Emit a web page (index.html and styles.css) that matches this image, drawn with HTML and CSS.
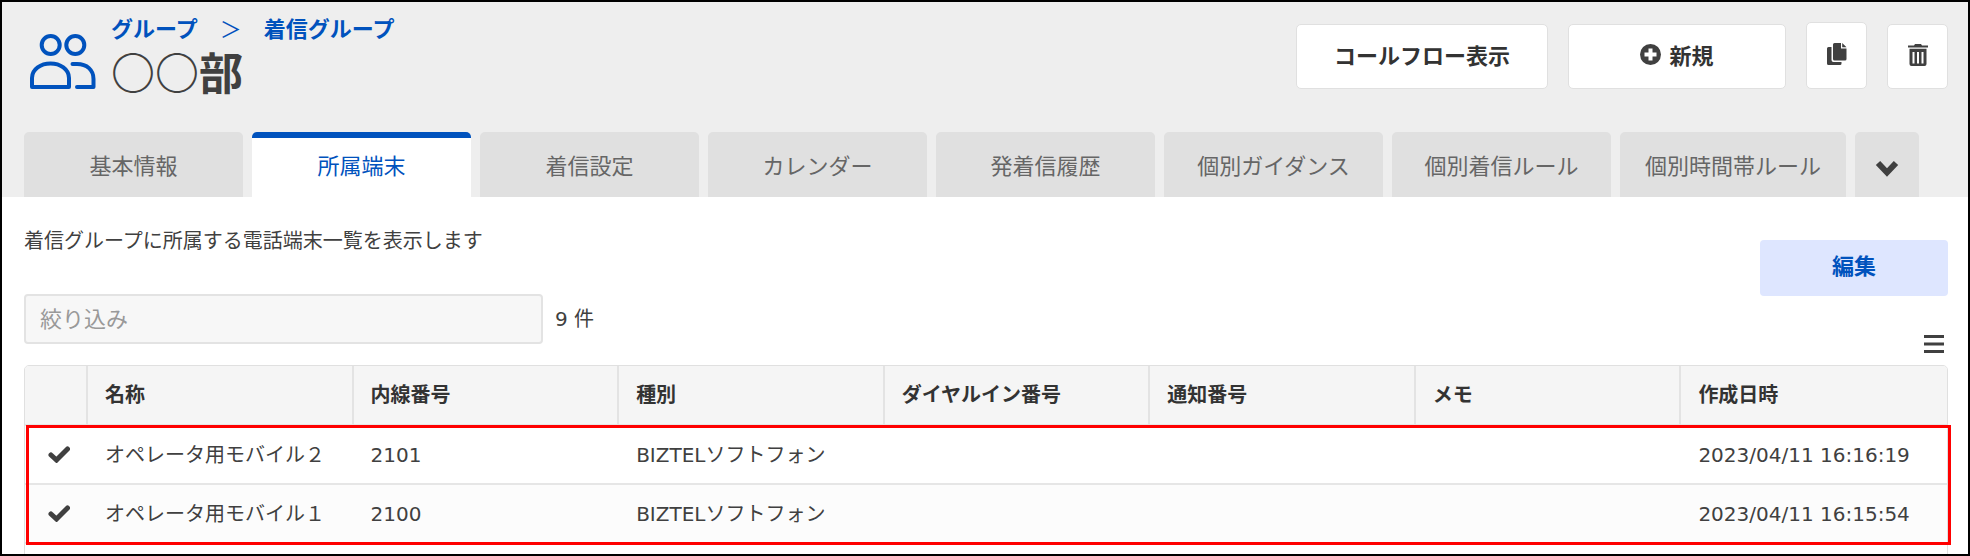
FILE: index.html
```html
<!DOCTYPE html>
<html lang="ja">
<head>
  <meta charset="UTF-8" />
  <meta name="viewport" content="width=device-width, initial-scale=1.0" />
  <title>着信グループ</title>
  <link rel="stylesheet" href="styles.css">
</head>
<body>
  <div class="page">
    <header class="header">
      <div class="header-top">
        <svg class="group-icon" viewBox="0 0 66 56" aria-hidden="true">
          <circle cx="20.7" cy="11" r="9" />
          <circle cx="45.3" cy="11" r="9" />
          <path d="M2 53 V44 C2 35 11 29.5 20.5 29.5 S39 35 39 44 V53 Z" />
          <path d="M42.500 30 H47 C57 30 63.500 36 63.500 45 V53 H47" />
        </svg>
        <div class="titles">
          <nav class="breadcrumb">
            <a href="#">グループ</a>
            <span>＞</span>
            <a href="#">着信グループ</a>
          </nav>
          <h1>○○部</h1>
        </div>
        <div class="actions">
          <button type="button" class="btn btn-flow">コールフロー表示</button>
          <button type="button" class="btn btn-new">
            <svg width="21" height="21" viewBox="0 0 21 21" aria-hidden="true">
              <circle cx="10.5" cy="10.5" r="10.5" />
              <path d="M8.500 4.500 h4 v4 h4 v4 h-4 v4 h-4 v-4 h-4 v-4 h4 z" fill="#fff" />
            </svg>
            新規
          </button>
          <button type="button" class="btn btn-icon btn-copy" aria-label="コピー">
            <svg width="20" height="22" viewBox="0 0 20 22" aria-hidden="true">
              <path d="M1.500 4 H4.500 V17 Q4.500 19 6.500 19 H14.500 V20.500 Q14.500 22 13 22 H1.500 Q0 22 0 20.500 V5.500 Q0 4 1.500 4 Z" />
              <path d="M7.500 0 H14 V5.500 H19.500 V16 Q19.500 17.500 18 17.500 H7.500 Q6 17.500 6 16 V1.500 Q6 0 7.500 0 Z M15.200 0 L19.500 4.300 H15.200 Z" />
            </svg>
          </button>
          <button type="button" class="btn btn-icon" aria-label="削除">
            <svg width="20" height="22" viewBox="0 0 20 22" aria-hidden="true">
              <path d="M0 1.500 H6 L7 0 H13 L14 1.500 H20 V3.500 H0 Z" />
              <path fill-rule="evenodd" d="M1.500 4.800 H18.500 V20 Q18.500 22 16.500 22 H3.500 Q1.500 22 1.500 20 Z M4.500 8 V19.500 H6.500 V8 Z M9 8 V19.500 H11 V8 Z M13.500 8 V19.500 H15.500 V8 Z" />
            </svg>
          </button>
        </div>
      </div>
      <nav class="tabs">
        <button type="button" class="tab">基本情報</button>
        <button type="button" class="tab active">所属端末</button>
        <button type="button" class="tab">着信設定</button>
        <button type="button" class="tab">カレンダー</button>
        <button type="button" class="tab">発着信履歴</button>
        <button type="button" class="tab">個別ガイダンス</button>
        <button type="button" class="tab">個別着信ルール</button>
        <button type="button" class="tab">個別時間帯ルール</button>
        <button type="button" class="tab tab-more" aria-label="その他">
          <svg width="24" height="18" viewBox="0 0 24 18" aria-hidden="true">
            <path d="M3 4 L12 13.500 L21 4" />
          </svg>
        </button>
      </nav>
    </header>

    <main class="panel">
      <div class="toolbar">
        <div class="toolbar-left">
          <p>着信グループに所属する電話端末一覧を表示します</p>
          <div class="filter">
            <input type="text" id="filter" placeholder="絞り込み" />
            <label for="filter">9 件</label>
          </div>
        </div>
        <div class="toolbar-right">
          <button type="button" class="btn-edit">編集</button>
          <button type="button" class="btn-menu" aria-label="メニュー">
            <svg width="20" height="18" viewBox="0 0 20 18" aria-hidden="true">
              <path d="M0 0 H20 V3 H0 Z M0 7.500 H20 V10.500 H0 Z M0 15 H20 V18 H0 Z" />
            </svg>
          </button>
        </div>
      </div>

      <div class="list">
        <table>
          <thead>
            <tr>
              <th class="col-check"></th>
              <th>名称</th>
              <th>内線番号</th>
              <th>種別</th>
              <th>ダイヤルイン番号</th>
              <th>通知番号</th>
              <th>メモ</th>
              <th>作成日時</th>
            </tr>
          </thead>
          <tbody>
            <tr>
              <td class="col-check"><svg class="check" viewBox="0 0 22 17" aria-hidden="true"><path d="M3 9 L8.500 14 L19.500 3" /></svg></td>
              <td>オペレータ用モバイル２</td>
              <td>2101</td>
              <td>BIZTELソフトフォン</td>
              <td></td>
              <td></td>
              <td></td>
              <td>2023/04/11 16:16:19</td>
            </tr>
            <tr>
              <td class="col-check"><svg class="check" viewBox="0 0 22 17" aria-hidden="true"><path d="M3 9 L8.500 14 L19.500 3" /></svg></td>
              <td>オペレータ用モバイル１</td>
              <td>2100</td>
              <td>BIZTELソフトフォン</td>
              <td></td>
              <td></td>
              <td></td>
              <td>2023/04/11 16:15:54</td>
            </tr>
            <tr>
              <td colspan="8"></td>
            </tr>
          </tbody>
        </table>
        <div class="highlight"></div>
      </div>
    </main>
  </div>
</body>
</html>
```

FILE: styles.css
```css
* {
  box-sizing: border-box;
}
body {
  margin: 0;
  font-family: "DejaVu Sans", "Noto Sans CJK JP", sans-serif;
  font-size: 20px;
  line-height: 30px;
  color: #404040;
}
h1, p {
  margin: 0;
}
button, input {
  font-family: inherit;
  color: inherit;
}
button {
  cursor: pointer;
}
svg {
  display: block;
  fill: #404040;
}
.page {
  height: 100vh;
  overflow: hidden;
  border: 2px solid #000;
  background-color: #fff;
}

/* Header */
.header {
  padding: 15px 20px 0 22px;
  background-color: #eee;
}
.header-top {
  display: flex;
  align-items: flex-start;
  margin-bottom: 39px;
}
.group-icon {
  width: 66px;
  height: 56px;
  margin: 17px 15px 0 6px;
  fill: none;
  stroke: #0052bd;
  stroke-width: 4;
  stroke-linejoin: round;
  stroke-linecap: round;
}
.titles {
  flex: 1;
}
.breadcrumb {
  display: flex;
  gap: 22px;
  margin-bottom: 6px;
  font-size: 22px;
  line-height: 26px;
  color: #0052bd;
}
.breadcrumb a {
  font-weight: bold;
  color: #0052bd;
  text-decoration: none;
}
h1 {
  font-family: "Noto Sans CJK JP", sans-serif;
  font-size: 44px;
  line-height: 44px;
}
.actions {
  display: flex;
  align-items: flex-end;
  gap: 20px;
  margin-top: 5px;
}
.btn {
  display: flex;
  align-items: center;
  justify-content: center;
  gap: 8px;
  height: 65px;
  padding: 0 0 5px;
  border: 1px solid #e0e0e0;
  border-radius: 5px;
  background-color: #fff;
  font-size: 22px;
  font-weight: bold;
  color: #333;
}
.btn-flow {
  width: 252px;
}
.btn-new {
  width: 218px;
}
.btn-icon {
  width: 61px;
  padding: 0 0 3px;
}
.btn-copy {
  height: 67px;
}

/* Tabs */
.tabs {
  display: flex;
  gap: 9px;
}
.tab {
  min-width: 219px;
  height: 65px;
  padding: 0 25px 8px;
  border: none;
  border-top: 6px solid #e0e0e0;
  border-radius: 5px 5px 0 0;
  background-color: #e0e0e0;
  font-size: 22px;
  color: #666;
  white-space: nowrap;
}
.tab.active {
  border-top-color: #0052bd;
  background-color: #fff;
  color: #0052bd;
}
.tab-more {
  min-width: 0;
  padding: 0 20px;
}
.tab-more svg {
  fill: none;
  stroke: #404040;
  stroke-width: 6;
}

/* Panel */
.panel {
  padding: 29px 20px 0 22px;
}
.toolbar {
  display: flex;
  justify-content: space-between;
  padding-bottom: 12px;
}
.filter {
  display: flex;
  align-items: center;
  gap: 12px;
  margin-top: 38px;
}
.filter input {
  width: 519px;
  height: 50px;
  padding: 0 14px;
  border: 2px solid #e3e3e3;
  border-radius: 4px;
  background-color: #f7f7f7;
  font-size: 22px;
}
.filter input::placeholder {
  color: #999;
}
.toolbar-right {
  display: flex;
  flex-direction: column;
  align-items: flex-end;
  padding-top: 14px;
}
.btn-edit {
  width: 188px;
  height: 56px;
  padding: 0 0 8px;
  border: none;
  border-radius: 4px;
  background-color: #dee6ff;
  font-size: 22px;
  font-weight: bold;
  color: #0052bd;
}
.btn-menu {
  margin: 39px 4px 0 0;
  padding: 0;
  border: none;
  background: none;
}

/* Device list */
.list {
  position: relative;
}
table {
  width: 100%;
  table-layout: fixed;
  border: 1px solid #e0e0e0;
  border-radius: 5px 5px 0 0;
  border-spacing: 0;
  overflow: hidden;
}
th, td {
  height: 59px;
  padding: 0 17px;
  border-bottom: 2px solid #e6e6e6;
  text-align: left;
  white-space: nowrap;
}
th {
  height: 60px;
  border-right: 2px solid #e3e3e3;
  background-color: #f5f5f5;
  color: #333;
}
th:last-child {
  border-right: none;
}
tbody tr:nth-child(even) {
  background-color: #fcfcfc;
}
.col-check {
  width: 63px;
  padding: 0 17px 0 23px;
}
.check {
  width: 22px;
  height: 17px;
  fill: none;
  stroke: #404040;
  stroke-width: 5;
  stroke-linecap: round;
}
.highlight {
  position: absolute;
  top: 60px;
  left: 2px;
  right: -3px;
  height: 120px;
  border: 3px solid #f00;
  pointer-events: none;
}
```
